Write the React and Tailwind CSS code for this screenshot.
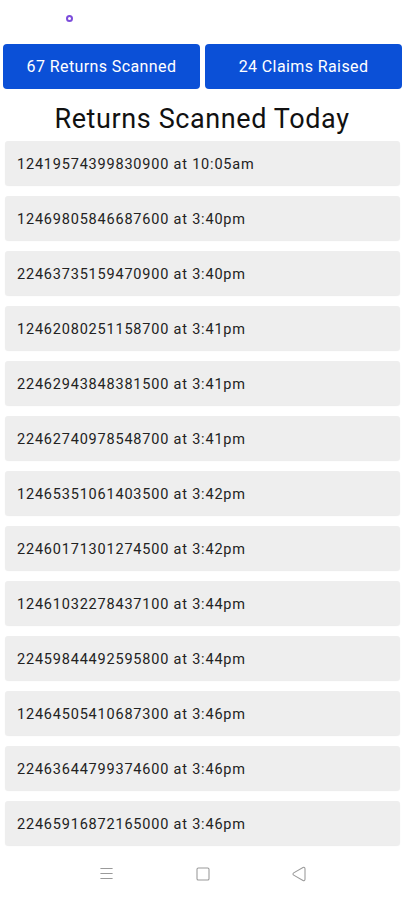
import { Menu, Square, Triangle } from "lucide-react";

const scans = [
  { id: "12419574399830900", time: "10:05am" },
  { id: "12469805846687600", time: "3:40pm" },
  { id: "22463735159470900", time: "3:40pm" },
  { id: "12462080251158700", time: "3:41pm" },
  { id: "22462943848381500", time: "3:41pm" },
  { id: "22462740978548700", time: "3:41pm" },
  { id: "12465351061403500", time: "3:42pm" },
  { id: "22460171301274500", time: "3:42pm" },
  { id: "12461032278437100", time: "3:44pm" },
  { id: "22459844492595800", time: "3:44pm" },
  { id: "12464505410687300", time: "3:46pm" },
  { id: "22463644799374600", time: "3:46pm" },
  { id: "22465916872165000", time: "3:46pm" }
];

export default function App() {
  return (
    <div
      className="w-[404px] h-[900px] bg-white flex flex-col overflow-hidden"
      style={{ fontFamily: "Roboto, 'Noto Sans', sans-serif" }}
    >
      {/* status area */}
      <div className="h-[44px] pl-[66px] pt-[15px]">
        <div className="w-[7px] h-[7px] rounded-full border-2 border-[#7c4ddb]" />
      </div>

      {/* counters */}
      <div className="flex gap-[5px] px-[3px] pr-[2px]">
        <button className="flex-1 h-[45px] rounded-[4px] bg-[#0b50d7] text-white text-[16px] tracking-[0.4px]">
          67 Returns Scanned
        </button>
        <button className="flex-1 h-[45px] rounded-[4px] bg-[#0b50d7] text-white text-[16px] tracking-[0.4px]">
          24 Claims Raised
        </button>
      </div>

      <h1 className="h-[52px] flex items-center justify-center text-[27px] tracking-[0.6px] text-[#111] pt-[8px]">
        Returns Scanned Today
      </h1>

      {/* list */}
      <div className="flex flex-col gap-[11px] pl-[5px] pr-[4px]">
        {scans.map((s, i) => (
          <div
            key={i}
            className="h-[44px] flex items-center px-[12px] pt-[3px] bg-[#eeeeee] rounded-[3px] shadow-[0_1px_1px_rgba(0,0,0,0.08)] text-[14.5px] tracking-[0.8px] text-[#222]"
          >
            {s.id} at {s.time}
          </div>
        ))}
      </div>

      {/* nav bar */}
      <div className="flex-1 flex items-center justify-center gap-[80px] pt-[2px] text-[#9a9a9a]">
        <Menu size={17} strokeWidth={1.6} />
        <Square size={16} strokeWidth={1.6} />
        <Triangle size={16} strokeWidth={1.6} className="-rotate-90" />
      </div>
    </div>
  );
}
